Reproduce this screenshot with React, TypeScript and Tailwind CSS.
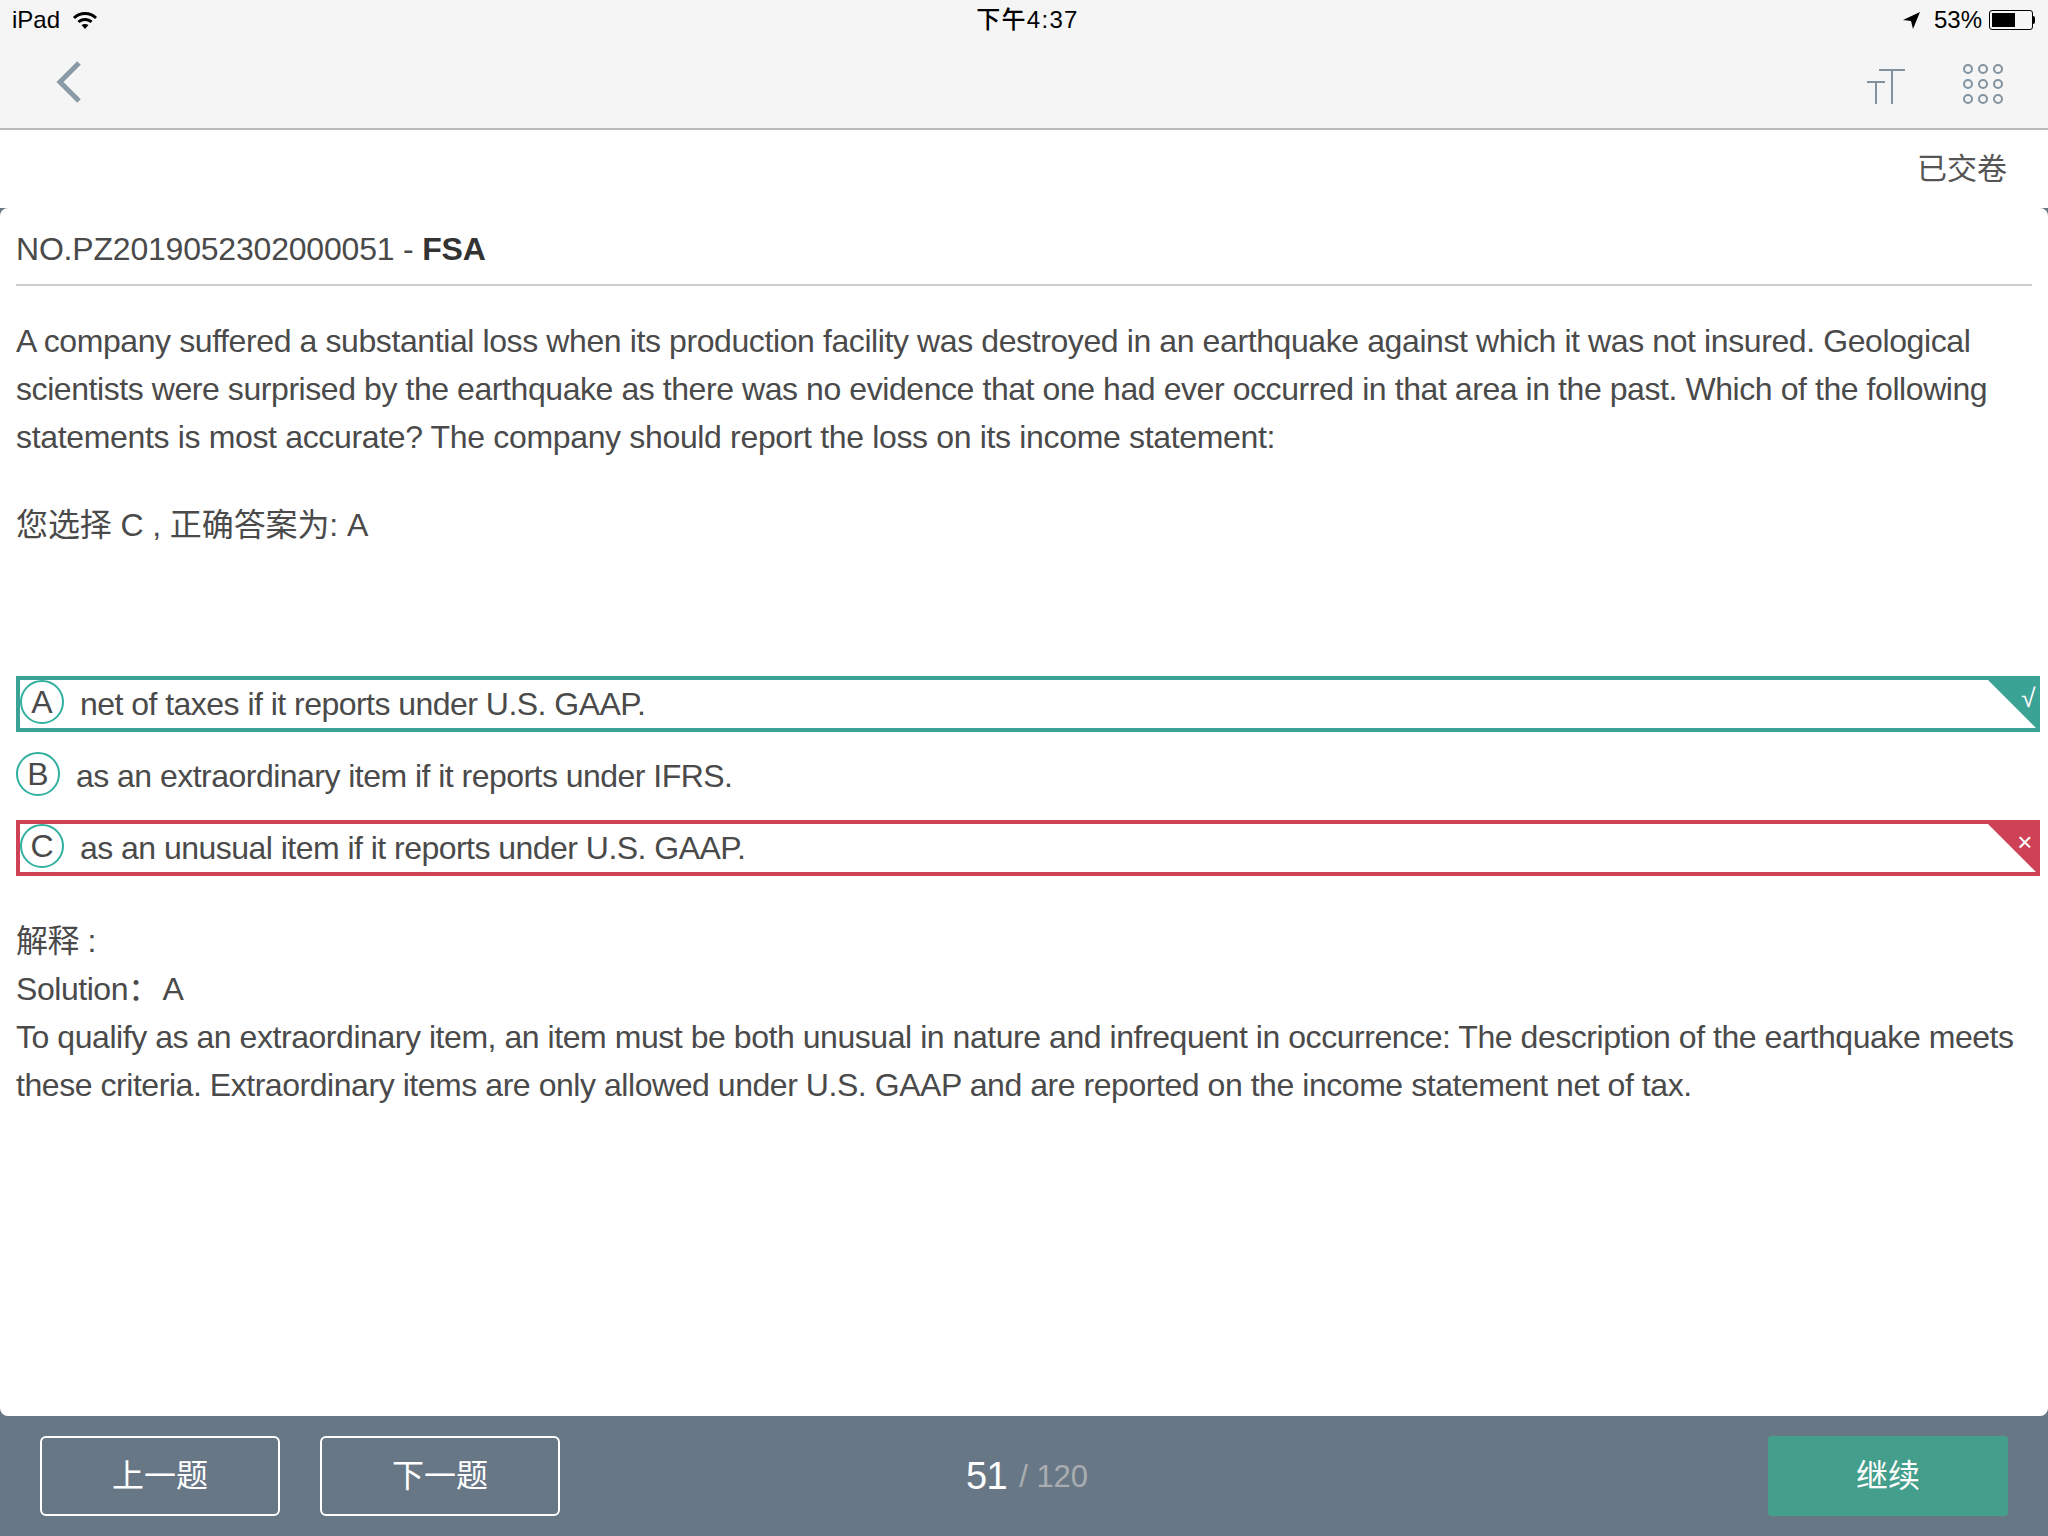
const fontStack = '[font-family:"Liberation_Sans","Noto_Sans_CJK_SC",sans-serif]'

const StatusBar = () => (
  <div className="flex h-10 items-center justify-between pl-3 pr-[13px] text-[24px] leading-none text-black">
    <div className="flex w-[308px] items-center gap-3">
      <span>iPad</span>
      <svg width="26" height="20" viewBox="0 0 26 20" fill="none">
        <path d="M2 8 C8 2 18 2 24 8" stroke="#000" strokeWidth="3" />
        <path d="M6.5 12 C10 8.5 16 8.5 19.5 12" stroke="#000" strokeWidth="3" />
        <path d="M9.5 15 L13 19 L16.5 15 C14.5 13.5 11.5 13.5 9.5 15 Z" fill="#000" />
      </svg>
    </div>
    <span className="font-medium tracking-[1.3px]">下午4:37</span>
    <div className="flex w-[300px] items-center justify-end gap-[7px]">
      <svg className="mr-[6px]" width="19" height="19" viewBox="0 0 19 19">
        <path d="M18 1 L1 9 L9 10 L11 18 Z" fill="#000" />
      </svg>
      <span>53%</span>
      <div className="flex items-center">
        <div className="h-[20px] w-[44px] rounded-[3px] border border-black p-[2px]">
          <div className="h-full w-[23px] bg-black" />
        </div>
        <div className="h-[8px] w-[2px] rounded-r-full bg-black" />
      </div>
    </div>
  </div>
)

const NavBar = () => (
  <div className="flex h-[90px] items-center justify-between border-b-2 border-[#b9b9b9] pl-[56px] pr-[45px]">
    <svg className="mb-[4px]" width="26" height="44" viewBox="0 0 26 44" fill="none">
      <path d="M23 3 L4 22 L23 41" stroke="#8a9ba8" strokeWidth="5" />
    </svg>
    <div className="flex items-center gap-[58px]">
      <svg className="mt-[6px]" width="38" height="36" viewBox="0 0 38 36" fill="none" stroke="#82929f" strokeWidth="2">
        <path d="M0 13 H18 M9 13 V35" />
        <path d="M12 1 H38 M25 1 V35" />
      </svg>
      <div className="grid grid-cols-3 gap-x-[5px] gap-y-[5px]">
        {Array.from({ length: 9 }).map((_, i) => (
          <div key={i} className="h-[10px] w-[10px] rounded-full border-2 border-[#82929f]" />
        ))}
      </div>
    </div>
  </div>
)

const Letter = ({ children }: { children: string }) => (
  <div className="flex h-[44px] w-[44px] shrink-0 items-center justify-center self-start rounded-full border-2 border-[#2fb0a0] text-[32px] leading-none tracking-normal">
    {children}
  </div>
)

const Footer = () => (
  <div className="flex h-[120px] items-center justify-between bg-[#687786] pl-[40px] pr-[40px]">
    <div className="flex w-[520px] gap-[40px]">
      <button className="h-[80px] w-[240px] rounded-[6px] border-2 border-white text-[32px] text-white">上一题</button>
      <button className="h-[80px] w-[240px] rounded-[6px] border-2 border-white text-[32px] text-white">下一题</button>
    </div>
    <div className="ml-[6px] flex items-center gap-[12px]">
      <span className="text-[38px] leading-none tracking-[-0.5px] text-white">51</span>
      <span className="text-[31px] leading-none text-[#a9adb0]">/ 120</span>
    </div>
    <div className="flex w-[520px] justify-end">
      <button className="h-[80px] w-[240px] rounded-[4px] bg-[#439e8b] text-[32px] text-white">继续</button>
    </div>
  </div>
)

const App = () => {
  return (
    <div className={`flex h-[1536px] w-[2048px] flex-col overflow-hidden bg-white ${fontStack}`}>
      <div className="bg-[#f5f5f5]">
        <StatusBar />
        <NavBar />
      </div>

      <div className="flex h-[78px] items-center justify-end pb-[2px] pr-[41px] text-[30px] text-[#555]">已交卷</div>

      <div className="flex flex-1 flex-col bg-[#687786]">
        <div className="flex-1 whitespace-nowrap rounded-[8px] bg-white px-4 pt-[17px] text-[32px] leading-[48px] tracking-[-0.4px] text-[#4a4a4a]">
          <div className="w-[2016px] border-b-2 border-[#cdcdcd] pb-[11px] tracking-[-0.2px]">
            NO.PZ2019052302000051 - <b className="text-[#333]">FSA</b>
          </div>

          <p className="mt-[31px]">
            A company suffered a substantial loss when its production facility was destroyed in an earthquake against which it was not insured. Geological
            <br />
            <span className="tracking-[-0.43px]">scientists were surprised by the earthquake as there was no evidence that one had ever occurred in that area in the past. Which of the following</span>
            <br />
            <span className="tracking-[-0.34px]">statements is most accurate? The company should report the loss on its income statement:</span>
          </p>

          <p className="mt-10 tracking-[-0.1px]">您选择 C , 正确答案为: A</p>

          {/* 选项 */}
          <div className="mt-[127px] w-[2024px] tracking-[-0.53px]">
            <div className="relative flex h-[56px] items-center gap-4 border-4 border-[#3ba396]">
              <Letter>A</Letter>
              <span>net of taxes if it reports under U.S. GAAP.</span>
              <svg className="absolute right-[-4px] top-[-4px]" width="56" height="56" viewBox="0 0 56 56">
                <path d="M0 0 H56 V56 Z" fill="#3ba396" />
              </svg>
              <span className="absolute right-[1px] top-0 text-[26px] leading-[36px] text-white">√</span>
            </div>
            <div className="mb-6 mt-5 flex h-[44px] items-center gap-4">
              <Letter>B</Letter>
              <span className="mt-[3px]">as an extraordinary item if it reports under IFRS.</span>
            </div>
            <div className="relative flex h-[56px] items-center gap-4 border-4 border-[#cf4155]">
              <Letter>C</Letter>
              <span>as an unusual item if it reports under U.S. GAAP.</span>
              <svg className="absolute right-[-4px] top-[-4px]" width="56" height="56" viewBox="0 0 56 56">
                <path d="M0 0 H56 V56 Z" fill="#cf4155" />
              </svg>
              <span className="absolute right-[4px] top-0 text-[26px] leading-[36px] text-white">×</span>
            </div>
          </div>

          <div className="mt-[41px] tracking-[-0.45px]">
            <p>解释 :</p>
            <p>
              Solution：<span className="ml-[3px]">A</span>
            </p>
            <p>
              To qualify as an extraordinary item, an item must be both unusual in nature and infrequent in occurrence: The description of the earthquake meets
              <br />
              these criteria. Extraordinary items are only allowed under U.S. GAAP and are reported on the income statement net of tax.
            </p>
          </div>
        </div>
      </div>

      <Footer />
    </div>
  )
}

export default App
